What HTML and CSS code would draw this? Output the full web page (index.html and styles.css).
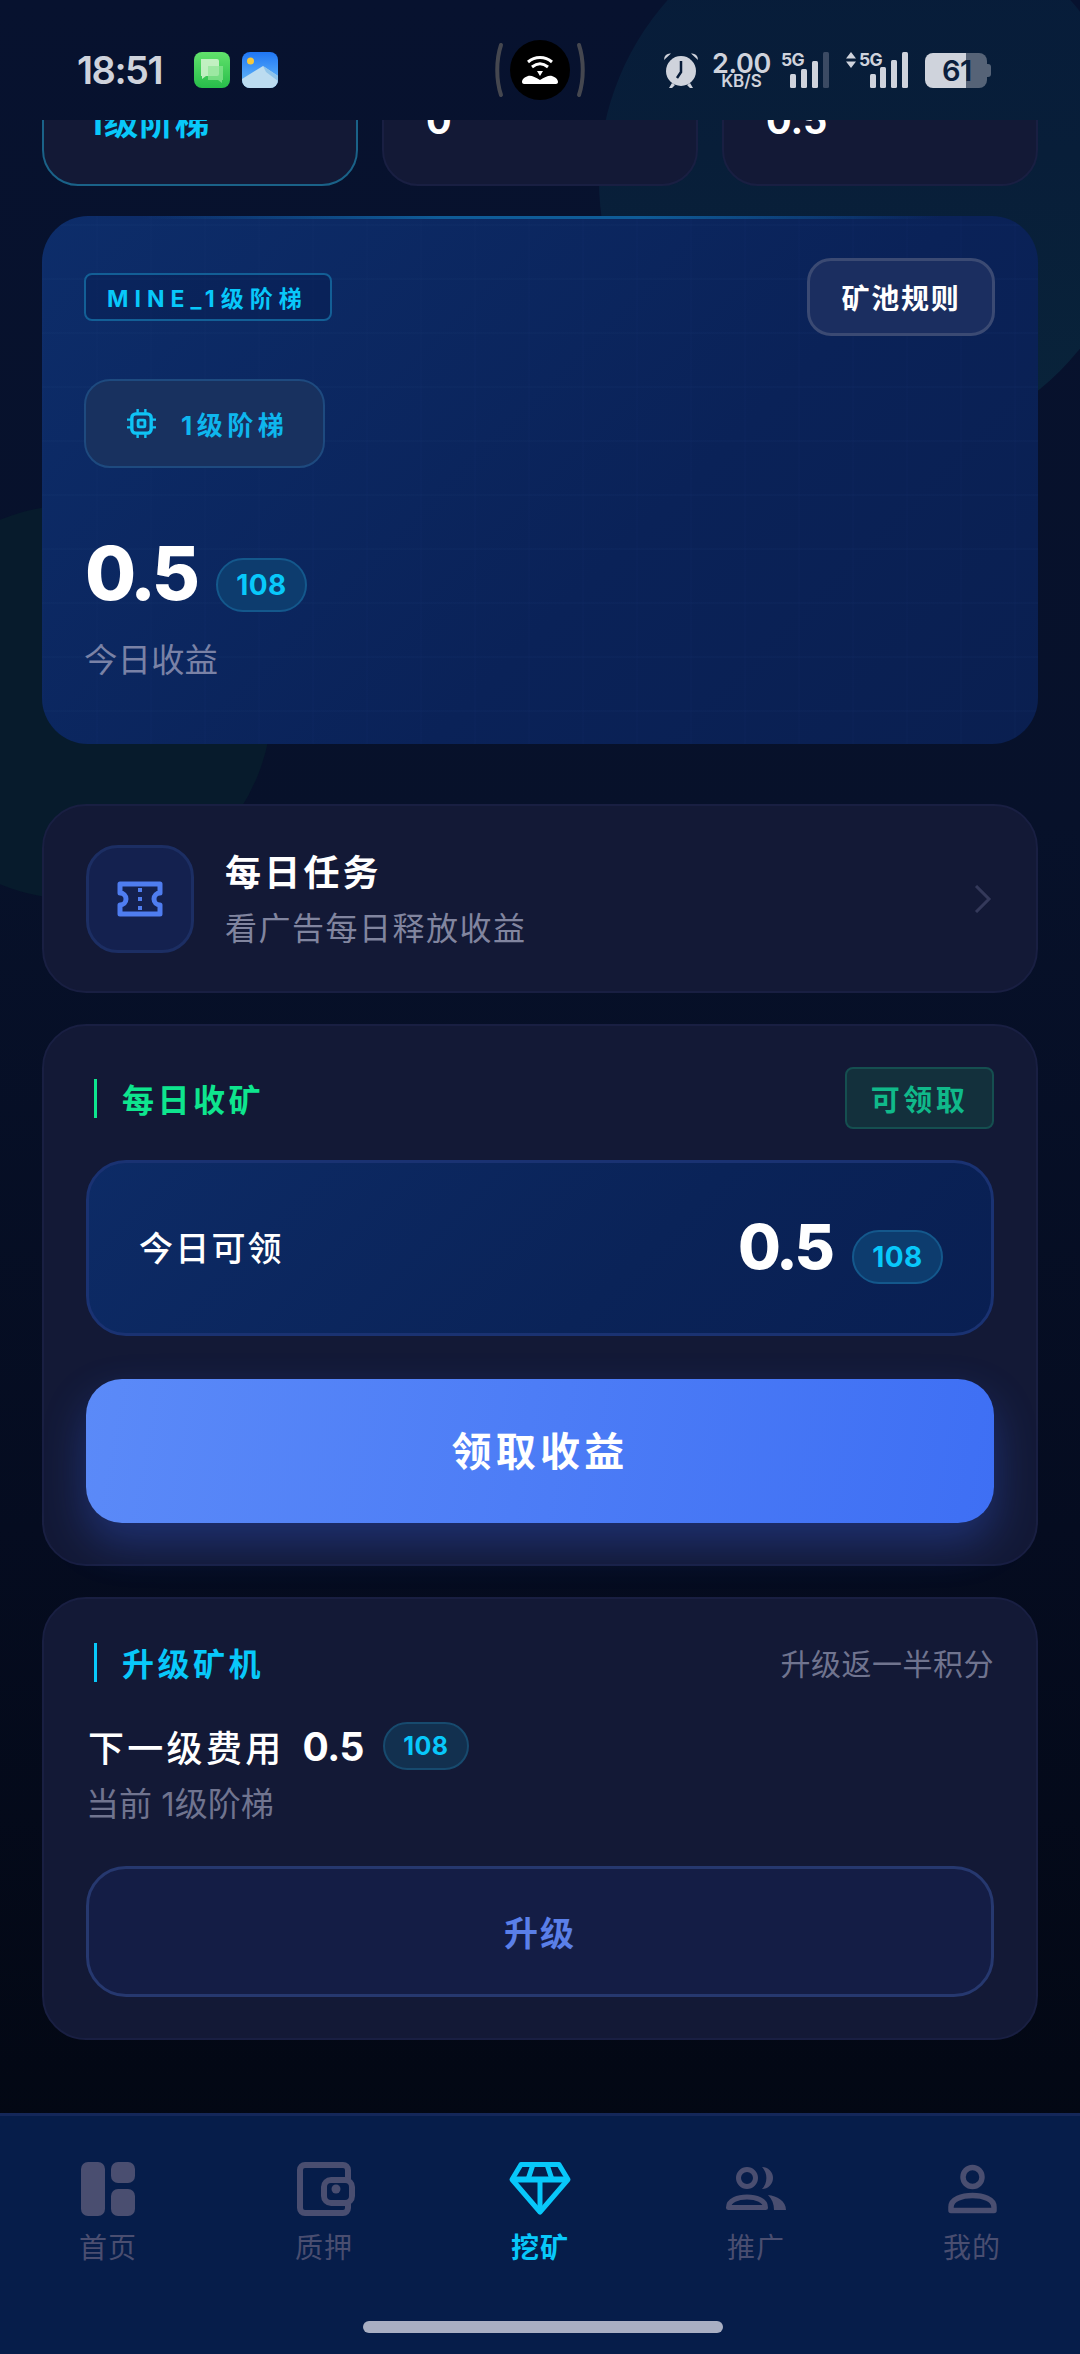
FILE: index.html
```html
<!DOCTYPE html>
<html lang="zh-CN">
<head>
<meta charset="utf-8">
<title>挖矿</title>
<link rel="stylesheet" href="styles.css">
</head>
<body>
<div class="app">
  <div class="blob blob-top"></div>
  <div class="blob blob-left"></div>

  <header class="status">
    <div class="status-left">
      <span class="clock">18:51</span>
      <svg class="app-icon" viewBox="0 0 36 36">
        <defs><linearGradient id="gMsg" x1="0" y1="0" x2="0" y2="1"><stop offset="0" stop-color="#62e26c"/><stop offset="1" stop-color="#27bd4a"/></linearGradient></defs>
        <rect width="36" height="36" rx="8" fill="url(#gMsg)"/>
        <path d="M7 7h16a2 2 0 0 1 2 2v13a2 2 0 0 1-2 2H12l-4 3v-3H7z" fill="#d6f5d2" fill-opacity=".85"/>
        <path d="M14 14h15v14h-1v3l-4-3H14z" fill="#8fe595" fill-opacity=".7"/>
      </svg>
      <svg class="app-icon" viewBox="0 0 36 36">
        <defs><linearGradient id="gPic" x1="0" y1="0" x2="0" y2="1"><stop offset="0" stop-color="#1f76f5"/><stop offset="1" stop-color="#6cc0f8"/></linearGradient></defs>
        <rect width="36" height="36" rx="8" fill="url(#gPic)"/>
        <circle cx="8.500" cy="9" r="3.500" fill="#f7c83c"/>
        <path d="M0 27 21 14l15 10v4a8 8 0 0 1-8 8H8a8 8 0 0 1-8-8z" fill="#bcdcf0"/>
        <path d="M21 14l15 10v5L24 20z" fill="#8fc4ea"/>
      </svg>
    </div>
    <div class="pill-group">
      <svg class="pill-arc" viewBox="0 0 10 56"><path d="M7 3C2 18 2 38 7 53" fill="none" stroke="#45474f" stroke-width="4" stroke-linecap="round"/></svg>
      <svg class="pill" viewBox="0 0 60 60">
        <circle cx="30" cy="30" r="30" fill="#000"/>
        <path d="M18 22c7-6 17-6 24 0M22 27c5-4 11-4 16 0" fill="none" stroke="#fff" stroke-width="3"/>
        <path d="M27 31h6l-3 5z" fill="#fff"/>
        <path d="M12 42c0-3 3-5 6-6 3-1 7 1 12 4 5-3 9-5 12-4 3 1 6 3 6 6 0 1-1 2-2 2H14c-1 0-2-1-2-2z" fill="#fff"/>
      </svg>
      <svg class="pill-arc" viewBox="0 0 10 56"><path d="M3 3C8 18 8 38 3 53" fill="none" stroke="#45474f" stroke-width="4" stroke-linecap="round"/></svg>
    </div>
    <div class="status-right">
      <svg class="alarm" viewBox="0 0 36 38">
        <path d="M1 9 8 2.500a6 6 0 0 0-7 6.500zM35 9l-7-6.500a6 6 0 0 1 7 6.500z" fill="#cfd3dc"/>
        <path d="M9 32l-3 5h3l3-3zM27 32l3 5h-3l-3-3z" fill="#cfd3dc"/>
        <circle cx="18" cy="20" r="15" fill="#cfd3dc"/>
        <path d="M18 10v11l-4 6" fill="none" stroke="#071b38" stroke-width="2.500"/>
      </svg>
      <div class="speed"><span class="speed-val">2.00</span><span class="speed-unit">KB/S</span></div>
      <div class="signal signal-a">
        <span class="net">5G</span>
        <svg class="bars" viewBox="0 0 40 36">
          <rect x="1" y="22" width="6" height="14" rx="1.500" fill="#cfd3dc"/>
          <rect x="12" y="17" width="6" height="19" rx="1.500" fill="#cfd3dc"/>
          <rect x="23" y="9" width="6" height="27" rx="1.500" fill="#cfd3dc"/>
          <rect x="34" y="0" width="6" height="36" rx="1.500" fill="#3b4a63"/>
        </svg>
      </div>
      <div class="signal signal-b">
        <svg class="updown" viewBox="0 0 10 16"><path d="M5 0l5 6.500H0zM5 16l5-6.500H0z" fill="#cfd3dc"/></svg>
        <span class="net">5G</span>
        <svg class="bars" viewBox="0 0 40 36">
          <rect x="2" y="22" width="6" height="14" rx="1.500" fill="#cfd3dc"/>
          <rect x="12" y="15" width="6" height="21" rx="1.500" fill="#cfd3dc"/>
          <rect x="23" y="8" width="6" height="28" rx="1.500" fill="#cfd3dc"/>
          <rect x="34" y="0" width="6" height="36" rx="1.500" fill="#cfd3dc"/>
        </svg>
      </div>
      <div class="battery"><span class="battery-num">61</span></div>
    </div>
  </header>

  <main class="content">
    <section class="stats">
      <div class="stat stat-active"><span class="stat-text stat-level">1级阶梯</span></div>
      <div class="stat"><span class="stat-text">0</span></div>
      <div class="stat"><span class="stat-text">0.5</span></div>
    </section>

    <section class="hero">
      <div class="hero-top">
        <span class="hero-tag">MINE_1级阶梯</span>
        <span class="rules">矿池规则</span>
      </div>
      <div class="chip">
        <svg class="chip-icon" viewBox="0 0 30 30" fill="none" stroke="#0fc3f5" stroke-width="3.500">
          <rect x="5" y="5" width="20" height="20" rx="4"/>
          <rect x="11.500" y="11.500" width="7" height="7" rx="1" stroke-width="3"/>
          <path d="M11 0v4M19 0v4M11 26v4M19 26v4M0 11h4M0 19h4M26 11h4M26 19h4" stroke-width="2.500"/>
        </svg>
        <span>1级阶梯</span>
      </div>
      <div class="amount">
        <span class="amount-num">0.5</span>
        <span class="badge">108</span>
      </div>
      <div class="hero-label">今日收益</div>
    </section>

    <section class="card task">
      <div class="task-icon">
        <svg viewBox="0 0 46 36" width="46" height="36" fill="none" stroke="#4f7df0" stroke-width="5" stroke-linejoin="round">
          <path d="M3 3h40v9a6 6 0 0 0 0 12v9H3v-9a6 6 0 0 0 0-12z"/>
          <path d="M23 7v4M23 16v4M23 25v4" stroke-width="4"/>
        </svg>
      </div>
      <div class="task-text">
        <div class="task-title">每日任务</div>
        <div class="task-sub">看广告每日释放收益</div>
      </div>
      <svg class="chevron" viewBox="0 0 19 28" fill="none" stroke="#34395a" stroke-width="3"><path d="M3 1l13 13L3 27"/></svg>
    </section>

    <section class="card collect">
      <div class="card-head">
        <h2 class="head-title head-green">每日收矿</h2>
        <span class="claimable">可领取</span>
      </div>
      <div class="today">
        <span class="today-label">今日可领</span>
        <div class="today-val">
          <span class="today-num">0.5</span>
          <span class="badge">108</span>
        </div>
      </div>
      <button class="claim-btn">领取收益</button>
    </section>

    <section class="card upgrade">
      <div class="card-head">
        <h2 class="head-title head-cyan">升级矿机</h2>
        <span class="head-note">升级返一半积分</span>
      </div>
      <div class="fee">
        <span class="fee-label">下一级费用</span>
        <span class="fee-num">0.5</span>
        <span class="badge badge-small">108</span>
      </div>
      <div class="current">当前 1级阶梯</div>
      <button class="upgrade-btn">升级</button>
    </section>
  </main>

  <nav class="tabbar">
    <div class="tabs">
      <div class="tab">
        <svg class="tab-icon" viewBox="0 0 64 54" fill="#4a4e70">
          <rect x="5" y="0" width="24" height="54" rx="7"/>
          <rect x="35" y="0" width="24" height="21" rx="7"/>
          <rect x="35" y="27" width="24" height="27" rx="7"/>
        </svg>
        <span>首页</span>
      </div>
      <div class="tab">
        <svg class="tab-icon" viewBox="0 0 64 54" fill="none" stroke="#4a4e70" stroke-width="6">
          <rect x="8" y="3" width="48" height="48" rx="5"/>
          <rect x="32" y="18" width="28" height="23" rx="7" fill="#061d4a"/>
          <circle cx="44" cy="27" r="4.500" fill="#4a4e70" stroke="none"/>
        </svg>
        <span>质押</span>
      </div>
      <div class="tab tab-active">
        <svg class="tab-icon" viewBox="0 0 64 54" fill="none" stroke="#08c8fa" stroke-width="5" stroke-linejoin="round">
          <path d="M13 2.500h38l9 15L32 50 4 17.500z"/>
          <path d="M4 17.500h56" stroke-width="6"/>
          <path d="M32 17.500V50M25 2.500l-5 15M39 2.500l5 15"/>
        </svg>
        <span>挖矿</span>
      </div>
      <div class="tab">
        <svg class="tab-icon" viewBox="0 0 64 54" fill="#4a4e70">
          <circle cx="23" cy="16" r="8.500" fill="none" stroke="#4a4e70" stroke-width="5"/>
          <path d="M4.500 45.500C4.500 38 14 35 23 35s18.500 3 18.500 10.500z" fill="none" stroke="#4a4e70" stroke-width="5" stroke-linejoin="round"/>
          <path d="M38 5a11 11 0 0 1 0 22 16 16 0 0 0 0-22z"/>
          <path d="M44 33c9 1 18 6 18 15H50c0-6-2-11-6-15z"/>
        </svg>
        <span>推广</span>
      </div>
      <div class="tab">
        <svg class="tab-icon" viewBox="0 0 64 54" fill="none" stroke="#4a4e70" stroke-width="5.500" stroke-linejoin="round">
          <circle cx="32.500" cy="15" r="9.500"/>
          <path d="M11 48.500V45c0-8 11-11.500 21.500-11.500S54 37 54 45v3.500z"/>
        </svg>
        <span>我的</span>
      </div>
    </div>
    <div class="home-bar"></div>
  </nav>
</div>
</body>
</html>
```
FILE: styles.css
```css
* { box-sizing: border-box; }

html, body {
  margin: 0;
  padding: 0;
  width: 1080px;
  height: 2354px;
  overflow: hidden;
}

body {
  font-family: Inter, "Noto Sans CJK SC", sans-serif;
  color: #fff;
  background: #040a1e;
}

.app {
  position: relative;
  width: 1080px;
  height: 2354px;
  display: flex;
  flex-direction: column;
  overflow: hidden;
  background: linear-gradient(180deg, #07122f 0%, #07112a 35%, #050c20 65%, #02060f 100%);
}

/* soft background shapes */
.blob {
  position: absolute;
  border-radius: 50%;
}

.blob-top {
  left: 599px;
  top: -90px;
  width: 540px;
  height: 540px;
  background: linear-gradient(180deg, #071c3a 0%, #081e39 45%, #09243a 100%);
}

.blob-left {
  left: -122px;
  top: 505px;
  width: 394px;
  height: 394px;
  background: #071b2c;
}

/* status bar */
.status {
  position: relative;
  flex: 0 0 120px;
  display: flex;
  align-items: center;
  padding: 20px 0 0 77px;
  color: #cfd3dc;
}

.status-left {
  width: 417px;
  display: flex;
  align-items: center;
  gap: 12px;
}

.clock {
  width: 105px;
  font-size: 38px;
  font-weight: 600;
  letter-spacing: -1.500px;
}

.app-icon {
  width: 36px;
  height: 36px;
}

.pill-group {
  width: 92px;
  display: flex;
  align-items: center;
  justify-content: space-between;
}

.pill { width: 60px; height: 60px; }
.pill-arc { width: 10px; height: 56px; }

.status-right {
  margin-left: 77px;
  display: flex;
  align-items: center;
  height: 40px;
}

.alarm { width: 36px; height: 38px; }

.speed {
  margin: -3px 0 0 13px;
  width: 59px;
  display: flex;
  flex-direction: column;
  align-items: center;
  font-weight: 600;
  line-height: 1;
}

.speed-val { font-size: 27px; height: 23px; letter-spacing: -.3px; }
.speed-unit { font-size: 17px; height: 14px; }

.signal {
  position: relative;
  height: 36px;
}

.signal-a { margin-left: 10px; width: 48px; }
.signal-b { margin-left: 17px; width: 62px; }

.net {
  position: absolute;
  top: -1px;
  font-size: 17.500px;
  font-weight: 700;
  line-height: 1;
  letter-spacing: -.8px;
}

.signal-a .net { left: 0; }
.signal-b .net { left: 13px; }

.bars {
  position: absolute;
  right: 0;
  top: 0;
  width: 40px;
  height: 36px;
}

.updown {
  position: absolute;
  left: 0;
  top: 0;
  width: 10px;
  height: 16px;
}

.battery {
  position: relative;
  margin-left: 17px;
  width: 62px;
  height: 35px;
  border-radius: 8px;
  background: linear-gradient(90deg, #cfd3dc 0 41px, #566377 41px);
  display: flex;
  align-items: center;
  padding-left: 17px;
}

.battery::after {
  content: "";
  position: absolute;
  right: -4px;
  top: 11px;
  width: 4px;
  height: 13px;
  border-radius: 0 3px 3px 0;
  background: #566377;
}

.battery-num {
  font-size: 29px;
  font-weight: 600;
  color: #0b1f3e;
  line-height: 1;
  letter-spacing: -.5px;
}

/* scrolled page body */
.content {
  position: relative;
  flex: 1;
  min-height: 0;
  overflow: hidden;
  padding: 0 42px;
}

.stats {
  margin-top: -84px;
  height: 150px;
  display: grid;
  grid-template-columns: repeat(3, 1fr);
  gap: 24px;
}

.stat {
  display: flex;
  align-items: flex-end;
  padding: 0 42px 42px;
  border: 2px solid #191f42;
  border-radius: 36px;
  background: #131936;
}

.stat-active {
  border-color: #1a6288;
  padding-left: 44px;
}

.stat-text {
  font-size: 38px;
  font-weight: 700;
  line-height: 1.1;
}

.stat-level {
  font-size: 34.500px;
  color: #08c8fa;
  letter-spacing: 1px;
}

.hero {
  position: relative;
  margin-top: 30px;
  height: 528px;
  padding: 42px 43px 0 42px;
  border-radius: 46px;
  overflow: hidden;
  background-color: #0b2459;
  background-image:
    linear-gradient(rgba(70, 130, 200, .028) 2px, transparent 2px),
    linear-gradient(90deg, rgba(70, 130, 200, .014) 2px, transparent 2px),
    linear-gradient(135deg, #0d2d6a 0%, #0a2258 60%, #0a1f50 100%);
  background-size: 54px 54px, 54px 54px, auto;
  background-position: 0 8px, 0 0, 0 0;
}

.hero::before {
  content: "";
  position: absolute;
  left: 0;
  right: 0;
  top: 0;
  height: 3px;
  background: linear-gradient(90deg, transparent 10%, #0f5c98 40%, #0f5c98 60%, transparent 90%);
}

.hero-top {
  display: flex;
  justify-content: space-between;
  align-items: center;
  height: 78px;
}

.hero-tag {
  display: flex;
  align-items: center;
  width: 248px;
  height: 48px;
  padding-left: 21px;
  border: 2px solid #135f96;
  border-radius: 8px;
  font-size: 23px;
  font-weight: 700;
  letter-spacing: 6px;
  color: #08c8fa;
  white-space: nowrap;
  background: rgba(6, 24, 72, .35);
}

.rules {
  display: flex;
  align-items: center;
  justify-content: center;
  width: 188px;
  height: 78px;
  border: 3px solid #3b4a73;
  border-radius: 24px;
  background: #1b2e60;
  font-size: 28px;
  font-weight: 700;
  letter-spacing: 1.800px;
}

.chip {
  display: flex;
  align-items: center;
  gap: 25px;
  width: 241px;
  height: 89px;
  margin-top: 43px;
  padding-left: 41px;
  border: 2px solid #1e4a7f;
  border-radius: 26px;
  background: #18315f;
  color: #0eb6ee;
  font-size: 26px;
  font-weight: 700;
  letter-spacing: 4.500px;
}

.chip-icon { width: 29px; height: 29px; flex: none; }

.amount {
  display: flex;
  align-items: flex-end;
  gap: 20px;
  margin-top: 68px;
}

.amount-num {
  font-size: 74px;
  font-weight: 800;
  line-height: 1;
  letter-spacing: -4px;
  padding-left: 1px;
}

.badge {
  display: flex;
  align-items: center;
  justify-content: center;
  width: 91px;
  height: 54px;
  border: 2px solid #14588c;
  border-radius: 27px;
  background: #0d3c6e;
  color: #08c8fa;
  font-size: 28px;
  font-weight: 700;
  letter-spacing: .5px;
  margin-bottom: -2px;
}

.hero-label {
  margin-top: 34px;
  font-size: 33.500px;
  line-height: 1;
  color: #7a82a6;
}

/* shared panel */
.card {
  border: 2px solid #191f42;
  border-radius: 44px;
  background: #131936;
}

.task {
  display: flex;
  align-items: center;
  height: 189px;
  margin-top: 60px;
  padding: 0 44px 0 42px;
}

.task-icon {
  flex: none;
  width: 108px;
  height: 108px;
  display: flex;
  align-items: center;
  justify-content: center;
  border: 3px solid #1c2e63;
  border-radius: 32px;
  background: #14214f;
}

.task-text {
  flex: 1;
  margin-left: 31px;
  padding-top: 3px;
}

.task-title {
  font-size: 36px;
  font-weight: 700;
  line-height: 1.2;
  letter-spacing: 3.200px;
}

.task-sub {
  margin-top: 15px;
  font-size: 32px;
  line-height: 1.2;
  letter-spacing: 1.500px;
  color: #81859f;
}

.chevron { width: 19px; height: 28px; flex: none; }

.collect {
  margin-top: 31px;
  height: 542px;
  padding: 41px 42px 0;
}

.card-head {
  display: flex;
  justify-content: space-between;
  align-items: center;
}

.collect .card-head { height: 62px; }

.head-title {
  margin: 0 0 0 8px;
  height: 39px;
  padding-left: 25px;
  border-left: 3px solid;
  display: flex;
  align-items: center;
  font-size: 32px;
  font-weight: 700;
  letter-spacing: 3.500px;
}

.head-green { color: #0ee58e; border-left-color: #0ee58e; }
.head-cyan { color: #08c8fa; border-left-color: #08c8fa; }

.claimable {
  display: flex;
  align-items: center;
  justify-content: center;
  width: 149px;
  height: 62px;
  border: 2px solid #154f50;
  border-radius: 8px;
  background: #13303c;
  color: #10b98a;
  font-size: 29px;
  font-weight: 700;
  letter-spacing: 3.500px;
}

.today {
  display: flex;
  justify-content: space-between;
  align-items: center;
  height: 176px;
  margin-top: 31px;
  padding: 2px 48px 0 50px;
  border: 3px solid #1a3272;
  border-radius: 40px;
  background: linear-gradient(135deg, #0d2b66 0%, #0a2358 60%, #091f52 100%);
}

.today-label {
  margin-top: -6px;
  font-size: 34px;
  font-weight: 500;
  letter-spacing: 2.200px;
}

.today-val {
  display: flex;
  align-items: flex-end;
  gap: 20px;
}

.today-num {
  font-size: 62px;
  font-weight: 800;
  line-height: 1;
  letter-spacing: -3px;
  margin-bottom: 4px;
}

.claim-btn {
  display: block;
  width: 100%;
  height: 144px;
  margin-top: 43px;
  padding-bottom: 6px;
  border: 0;
  border-radius: 36px;
  background: linear-gradient(100deg, #5b8af8 0%, #3e6ff4 100%);
  box-shadow: 0 20px 44px rgba(56, 100, 240, .32);
  color: #fff;
  font-family: inherit;
  font-size: 40px;
  font-weight: 700;
  letter-spacing: 4.300px;
}

.upgrade {
  margin-top: 31px;
  height: 443px;
  padding: 43px 42px 0;
}

.upgrade .card-head { height: 40px; }

.head-note {
  font-size: 30px;
  color: #70748f;
  letter-spacing: .5px;
}

.fee {
  display: flex;
  align-items: center;
  margin-top: 40px;
  height: 48px;
  padding-left: 2px;
}

.fee-label {
  font-size: 36px;
  font-weight: 500;
  letter-spacing: 3.300px;
}

.fee-num {
  margin-left: 18px;
  font-size: 39px;
  font-weight: 700;
  letter-spacing: -.5px;
}

.badge-small {
  width: 86px;
  height: 48px;
  margin: 0 0 0 19px;
  font-size: 25px;
  background: #12304f;
  border-color: #174a6e;
}

.current {
  margin-top: 15px;
  font-size: 33px;
  line-height: 1.2;
  color: #70748f;
}

.upgrade-btn {
  display: block;
  width: 100%;
  height: 131px;
  margin-top: 41px;
  border: 3px solid #26386f;
  border-radius: 40px;
  background: #141d45;
  color: #5a7fe8;
  font-family: inherit;
  font-size: 34px;
  font-weight: 700;
  letter-spacing: 2px;
}

/* bottom navigation */
.tabbar {
  position: relative;
  flex: 0 0 241px;
  border-top: 3px solid #142759;
  background: #061d4a;
}

.tabs {
  display: grid;
  grid-template-columns: repeat(5, 1fr);
  padding-top: 46px;
}

.tab {
  display: flex;
  flex-direction: column;
  align-items: center;
  font-size: 28px;
  line-height: 1;
  color: #4a4e70;
}

.tab span { margin-top: 18px; letter-spacing: 1px; }

.tab-active { color: #08c8fa; font-weight: 700; }

.tab-icon { width: 64px; height: 54px; }

.home-bar {
  position: absolute;
  left: 363px;
  top: 205px;
  width: 360px;
  height: 12px;
  border-radius: 6px;
  background: #a9afc3;
}
```
